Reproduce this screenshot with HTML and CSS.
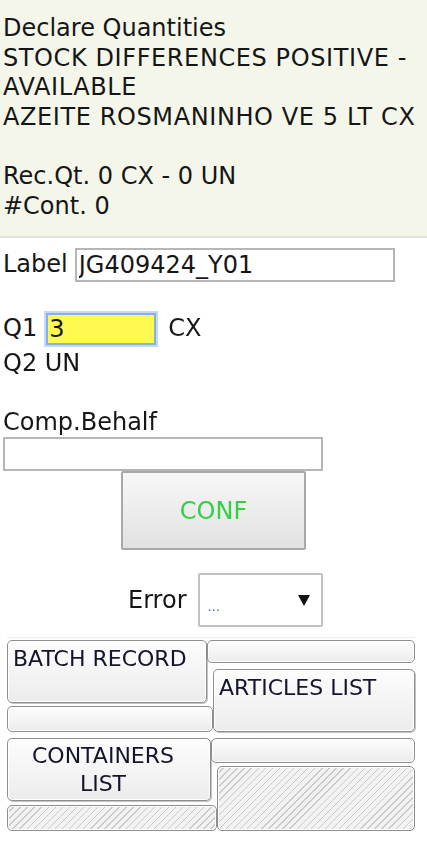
FILE: index.html
```html
<!DOCTYPE html>
<html lang="en">
<head>
  <meta charset="UTF-8">
  <meta name="viewport" content="width=device-width, initial-scale=1.0">
  <title>Declare Quantities</title>
  <link rel="stylesheet" href="styles.css">
</head>
<body>

<header class="dq-header">
  <div>Declare Quantities</div>
  <div class="dq-caps">STOCK DIFFERENCES POSITIVE - AVAILABLE</div>
  <div class="dq-caps">AZEITE ROSMANINHO VE 5 LT CX</div>
  <div>&nbsp;</div>
  <div>Rec.Qt. 0 CX - 0 UN</div>
  <div>#Cont. 0</div>
</header>

<main class="dq-form">
  <div class="dq-row dq-label-row">
    <label for="dqLabel">Label</label>
    <input id="dqLabel" class="dq-input dq-input-label" type="text" value="JG409424_Y01">
  </div>

  <div class="dq-row dq-q1-row">
    <label for="dqQ1">Q1</label>
    <input id="dqQ1" class="dq-input dq-input-qty" type="text" value="3" autofocus>
    <span>CX</span>
  </div>
  <div class="dq-q2">Q2 UN</div>

  <div class="dq-comp">Comp.Behalf</div>
  <input class="dq-input dq-input-comp" type="text">

  <button class="dq-conf">CONF</button>

  <div class="dq-row dq-error-row">
    <label for="dqError">Error</label>
    <div class="dq-select-wrap">
      <select id="dqError" class="dq-select">
        <option>...</option>
      </select>
      <svg class="dq-select-arrow" viewBox="0 0 12 11" width="12" height="11">
        <polygon points="0,0 12,0 6,11" fill="#111"/>
      </svg>
    </div>
  </div>
</main>

<nav class="dq-tabs">
  <div class="dq-tab-block">
    <div class="dq-tab-col">
      <button class="dq-tab">BATCH RECORD</button>
      <div class="dq-fill dq-fill-26"></div>
    </div>
    <div class="dq-tab-col dq-tab-col-right">
      <div class="dq-fill dq-fill-23"></div>
      <button class="dq-tab">ARTICLES LIST</button>
    </div>
  </div>

  <div class="dq-tab-block dq-tab-block-wide">
    <div class="dq-tab-col dq-tab-col-low">
      <button class="dq-tab dq-tab-center">CONTAINERS<br>LIST</button>
      <div class="dq-fill dq-fill-26 dq-hatch"></div>
    </div>
    <div class="dq-tab-col dq-tab-col-right dq-tab-col-tight">
      <div class="dq-fill dq-fill-25"></div>
      <div class="dq-fill dq-fill-65 dq-hatch"></div>
    </div>
  </div>
</nav>

</body>
</html>
```

FILE: styles.css
```css
* {
  margin: 0;
  padding: 0;
  box-sizing: border-box;
}

body {
  font-family: "DejaVu Sans", Verdana, sans-serif;
  font-size: 24px;
  line-height: 29.6px;
  color: #161616;
  background-color: #fff;
}

.dq-header {
  background-color: #f5f6ea;
  padding: 14px 3px 15px;
  border-bottom: 2px solid #e3e3dd;
}

/* uppercase lines run a little wider in the original font */
.dq-caps {
  letter-spacing: 0.6px;
}

.dq-form {
  padding: 0 3px;
}

.dq-row {
  display: flex;
  align-items: center;
}

.dq-input {
  font-family: inherit;
  font-size: 24px;
  color: #161616;
  background-color: #fff;
  border: 2px solid #b6b6b6;
  outline: none;
  padding: 0 2px;
}

.dq-label-row {
  margin-top: 10px;
}

.dq-input-label {
  width: 320px;
  height: 34px;
  margin-left: 7px;
}

.dq-q1-row {
  margin-top: 31px;
}

.dq-input-qty {
  width: 110px;
  height: 32px;
  margin: 0 12px 0 9px;
  background-color: #fffa4f;
  border: 2px solid #86b0e8;
  box-shadow: 0 0 0 2px #c4d9f5;
  padding: 0 1px;
  caret-color: #000;
}

.dq-q2 {
  margin-top: 4px;
}

.dq-comp {
  margin-top: 29px;
}

.dq-input-comp {
  display: block;
  width: 320px;
  height: 34px;
}

.dq-conf {
  display: block;
  width: 185px;
  height: 79px;
  margin: 0 auto;
  font-family: inherit;
  font-size: 24px;
  color: #35cf45;
  background: linear-gradient(#f7f7f7, #e2e2e2);
  border: 2px solid #a9a9a9;
  border-radius: 2px;
  cursor: pointer;
}

.dq-error-row {
  margin-top: 23px;
  padding-left: 125px;
}

.dq-select-wrap {
  position: relative;
  margin-left: 11px;
}

.dq-select {
  display: block;
  width: 125px;
  height: 54px;
  appearance: none;
  -webkit-appearance: none;
  font-family: "Liberation Sans", Arial, sans-serif;
  font-size: 15px;
  color: #4a6da8;
  background-color: #fff;
  border: 2px solid #c2c2c2;
  border-radius: 2px;
  padding: 10px 8px 0;
  outline: none;
}

.dq-select-arrow {
  position: absolute;
  right: 13px;
  top: 22px;
  pointer-events: none;
}

.dq-tabs {
  margin: 10px 12px 0 7px;
  padding-top: 2px;
  border-top: 1px solid #ececec;
}

.dq-tab-block {
  display: grid;
  grid-template-columns: 206px 1fr;
}

.dq-tab-block-wide {
  grid-template-columns: 210px 1fr;
  margin-top: 6px;
}

.dq-tab-col {
  display: flex;
  flex-direction: column;
  gap: 3px;
}

.dq-tab-col-right {
  gap: 6px;
}

.dq-tab-col-low {
  gap: 4px;
}

.dq-tab-col-tight {
  gap: 3px;
}

.dq-tab {
  height: 63px;
  font-family: inherit;
  font-size: 22px;
  line-height: 28px;
  color: #14142a;
  text-align: left;
  padding: 4px 4px 0 5px;
  display: flex;
  align-items: flex-start;
  background: linear-gradient(#fdfdfd, #ececec);
  border: 1px solid #8e8e8e;
  border-radius: 5px;
  box-shadow: inset 0 0 0 1px #fff, 1px 1px 0 #c4c4c4;
  cursor: pointer;
}

.dq-tab-col:first-child .dq-tab {
  margin-right: 6px;
}

.dq-tab-center {
  text-align: center;
  align-items: center;
  justify-content: center;
  padding: 0 12px 0 0;
}

.dq-fill {
  background: linear-gradient(#fdfdfd, #ececec);
  border: 1px solid #8e8e8e;
  border-radius: 5px;
  box-shadow: inset 0 0 0 1px #fff;
}

.dq-tab-col-right .dq-fill:first-child {
  margin-left: -6px;
}

.dq-fill-23 { height: 23px; }
.dq-fill-25 { height: 25px; }
.dq-fill-26 { height: 26px; }
.dq-fill-65 { height: 65px; }

.dq-hatch {
  background: repeating-linear-gradient(135deg, #f2f2f2 0, #f2f2f2 4px, #c9c9c9 4px, #c9c9c9 5px);
}
```
